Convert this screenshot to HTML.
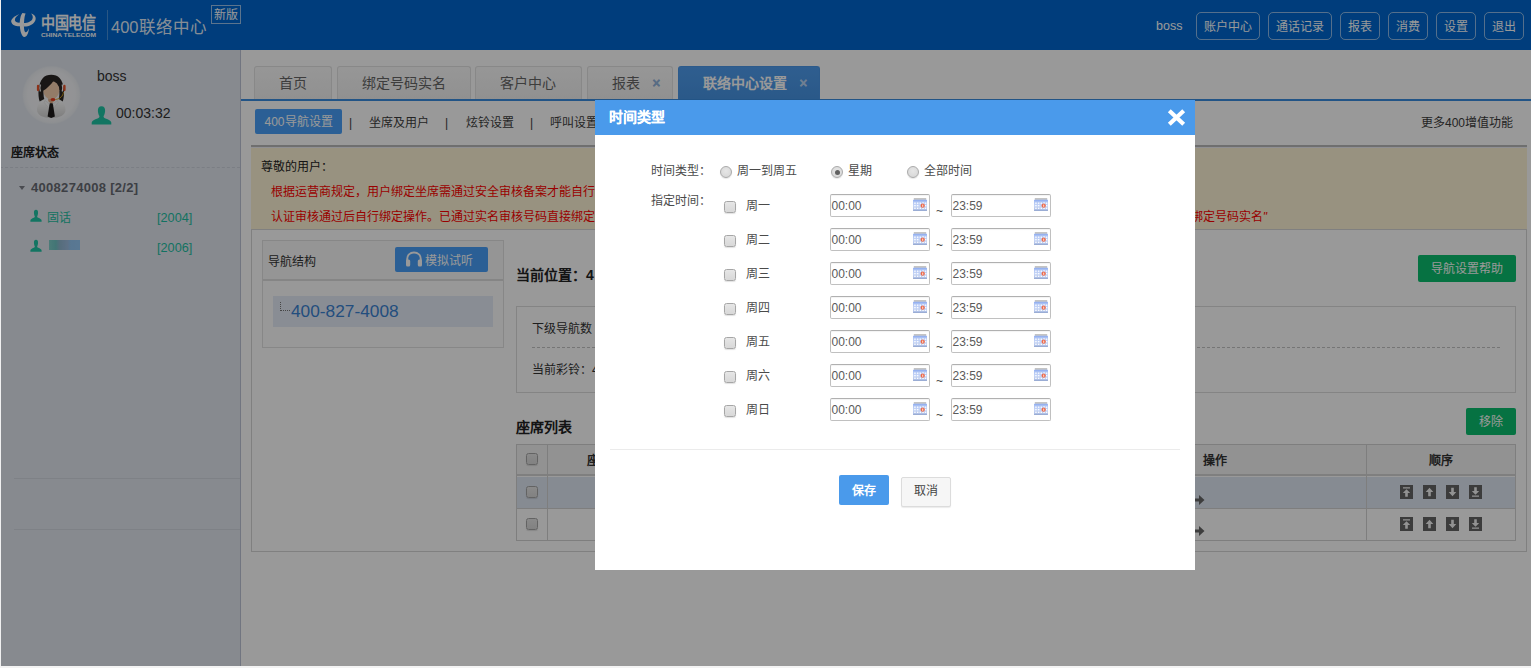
<!DOCTYPE html>
<html lang="zh-CN">
<head>
<meta charset="utf-8">
<title>400联络中心</title>
<style>
*{box-sizing:border-box;margin:0;padding:0}
html,body{width:1531px;height:668px;overflow:hidden;background:#f3f3f3}
body{font-family:"Liberation Sans",sans-serif;font-size:12px;color:#333;position:relative;line-height:1}
.a{position:absolute;white-space:nowrap}
#page{position:absolute;z-index:0;left:0;top:0;width:1531px;height:666px;background:#fff;overflow:hidden}
#page>*{position:absolute}
/* header */
#hdr{left:0;top:0;width:1531px;height:50px;background:#0067cf}
.hb{position:absolute;top:12px;height:28px;border:1px solid rgba(255,255,255,.55);border-radius:5px;color:#fff;font-size:12px;line-height:28px;text-align:center}
/* sidebar */
#side{left:0;top:50px;width:241px;z-index:2;height:616px;background:#e1e6ee;border-right:1px solid #bcc3d6}
/* main */
#main{left:240px;top:50px;width:1291px;height:616px;background:#fff}
.tab{position:absolute;top:16px;height:33px;border:1px solid #e3e3e3;border-bottom:none;border-radius:3px 3px 0 0;background:linear-gradient(#fbfbfb,#f1f1f1);font-size:14px;color:#666;line-height:32px;padding-left:24px}
.tab.on{background:linear-gradient(#4f9def,#4794e4);border-color:#4a97e8;color:#fff;font-weight:bold}
.tab i{position:absolute;font-style:normal;font-weight:bold;font-size:14px;right:11.6px;top:0;color:#93b4dc;text-shadow:0 0 .6px #93b4dc}
.tab.on i{color:#b9d4f3;text-shadow:0 0 .6px #b9d4f3}
.gbtn{position:absolute;background:#0bbf6e;color:#fff;border-radius:2px;text-align:center;font-size:12px}
.bbtn{position:absolute;background:#499ff8;color:#fff;border-radius:2px;text-align:center;font-size:12px}
.ic{position:absolute;width:13px;height:14px;background:#666}
.cb{position:absolute;width:12px;height:12px;border:1px solid #a6a6a6;border-radius:2.5px;background:linear-gradient(#e6e6e6,#d8d8d8);box-shadow:0 1px 1px rgba(0,0,0,.12)}
/* overlay + modal */
#ov{position:absolute;z-index:5;left:0;top:0;width:1531px;height:666px;background:rgba(0,0,0,.4)}
#modal{position:absolute;z-index:6;left:595px;top:100px;width:600px;height:470px;background:#fff;color:#4a4a4a}
#mh{position:absolute;left:0;top:0;width:600px;height:34.5px;background:#4a9aeb}
.rd{position:absolute;width:12px;height:12px;border:1px solid #aaa;border-radius:50%;background:radial-gradient(circle at 50% 40%,#e6e6e6,#d4d4d4);box-shadow:0 1px 1px rgba(0,0,0,.1)}
.rd.on:after{content:"";position:absolute;left:2.5px;top:2.5px;width:5px;height:5px;border-radius:50%;background:#606060}
.inp{position:absolute;width:100px;height:23px;border:1px solid #c0c0c0;border-top-color:#b0b0b0;border-radius:2px;background:#fff;box-shadow:inset 0 1px 1px rgba(0,0,0,.05);font-size:12px;color:#5a5a5a;line-height:23px;padding-left:0.5px}
.cal{position:absolute;left:82px;top:3px;width:14px;height:13px}
.til{position:absolute;font-size:12px;color:#444}
</style>
</head>
<body>
<div id="page">
<div id="hdr">
<svg class="a" style="left:0;top:0" width="260" height="50" viewBox="0 0 260 50">
 <g fill="#fff">
  <path d="M19.2,14.2C14,16 10.600,19.500 11.300,22C12.200,25.300 16.500,26.600 20.500,26.200L20.500,22.600C17.500,23 15.200,22 14.900,20.300C14.600,18.300 16.400,16 19.200,14.200Z"/>
  <path d="M31,13.400C35.200,14.500 36.600,17.800 35.200,20.800C33.500,24.500 28.500,26.800 24,26.600L24,23C27.500,23 31.200,21.500 32.400,19C33.300,17 32.600,14.800 31,13.400Z"/>
  <path d="M22.400,13C20.600,15 19.600,20 19.800,25C20,31 21.500,36 24,36.900C26.800,37.300 28.700,33 28.900,28.200C27.800,30.800 26.600,32.600 25.400,32.200C24.200,31.500 23.800,27.500 24,23C24.200,18.500 24.800,15.200 25.600,13.600Z"/>
 </g>
 <text x="41" y="29.5" font-family="Liberation Serif, serif" font-weight="bold" font-size="14" fill="#fff" textLength="55" lengthAdjust="spacingAndGlyphs" transform="translate(0,-6.1) scale(1,1.18)">中国电信</text>
 <text x="41" y="37" font-family="Liberation Sans, sans-serif" font-weight="bold" font-size="5.9" fill="#fff" textLength="55" lengthAdjust="spacingAndGlyphs">CHINA TELECOM</text>
 <rect x="107" y="10" width="1" height="30" fill="rgba(255,255,255,.28)"/>
</svg>
<div class="a" style="left:111px;top:18.3px;font-size:16.5px;color:rgba(255,255,255,.9);font-weight:300;line-height:18px">400联络中心</div>
<div class="a" style="left:211px;top:5px;width:30px;height:19px;border:1px solid rgba(255,255,255,.6);color:#fff;font-size:12px;line-height:18px;text-align:center">新版</div>
<div class="a" style="left:1156px;top:19px;color:#fff;font-size:12.5px;line-height:14px">boss</div>
<div class="hb" style="left:1196px;width:64px">账户中心</div>
<div class="hb" style="left:1268px;width:64px">通话记录</div>
<div class="hb" style="left:1340px;width:40px">报表</div>
<div class="hb" style="left:1388px;width:40px">消费</div>
<div class="hb" style="left:1436px;width:40px">设置</div>
<div class="hb" style="left:1484px;width:40px">退出</div>
</div>

<div id="side">
<svg class="a" style="left:21px;top:15px" width="60" height="60" viewBox="0 0 60 60">
<defs><radialGradient id="avg" cx=".5" cy=".5" r=".5"><stop offset="0" stop-color="#f9f9fb"/><stop offset=".8" stop-color="#f4f5f8"/><stop offset=".94" stop-color="#eceff3"/><stop offset="1" stop-color="#e1e6ee"/></radialGradient>
<linearGradient id="shg" x1="0" y1="0" x2="0" y2="1"><stop offset="0" stop-color="#fff"/><stop offset="1" stop-color="#d2d2d2"/></linearGradient></defs>
<circle cx="30.500" cy="30" r="29.500" fill="url(#avg)"/>
<path transform="translate(30.3 0) scale(.9 1) translate(-30.3 0)" d="M17.400,36.600C15,30 15.500,18.500 21,13C25,8.800 35.500,8.800 39.500,13C45,18.500 45.500,30 43.100,36.600L38.500,34C39.500,31 39.500,28 39,25L22,25C21.500,28 21.500,31 22.500,34Z" fill="#2a2624"/>
<path d="M16,45C16,39 19,36.200 24,35.200L27.500,34.600L30.200,38.200L33,34.600L36.500,35.200C41.500,36.200 44.500,39 44.500,45C44.500,50 38.500,53 30.200,53C22,53 16,50 16,45Z" fill="url(#shg)"/>
<path d="M27.200,32.500L33.300,32.500L33.300,36L30.200,39L27.200,36Z" fill="#e2b08c"/>
<ellipse cx="30.300" cy="25.200" rx="8" ry="9.300" fill="#f6cfae"/>
<path d="M21.800,26C20.500,17 25,11.200 31,11.600C37,12 40,16.500 39.200,23.500C37.500,19.500 35.500,16.800 33,15.200C30,19.500 26,23.500 21.800,26Z" fill="#2a2624"/>
<path d="M19.400,19.500Q18.200,23 19.400,26.500" stroke="#fff" stroke-width="1.200" fill="none"/>
<path d="M41.200,19.500Q42.400,23 41.200,26.500" stroke="#fff" stroke-width="1.200" fill="none"/>
<rect x="15.900" y="19.800" width="2.300" height="6.400" rx="1.100" fill="#ea5228"/>
<rect x="42.300" y="19.800" width="2.300" height="6.400" rx="1.100" fill="#ea5228"/>
<path d="M42.500,27C42,31.500 39,33.800 34.500,34.500" stroke="#d9a21c" stroke-width=".9" fill="none"/>
<ellipse cx="32" cy="34.600" rx="2.500" ry="1.500" fill="#ea3a1c"/>
<path d="M24,35.400L30.200,40.500L28,43.200L23.200,37.500Z" fill="#fafafa" stroke="#d5d5d5" stroke-width=".4"/>
<path d="M36.500,35.400L30.200,40.500L32.500,43.200L37.200,37.500Z" fill="#fafafa" stroke="#d5d5d5" stroke-width=".4"/>
<path d="M28.900,38.200L31.600,38.200L32.100,40.300L33.900,51.400L30.200,53L26.600,51.400L28.400,40.300Z" fill="#1f1c1c"/>
</svg>
<div class="a" style="left:97px;top:18px;font-size:14px;color:#333;line-height:16px">boss</div>
<svg class="a" style="left:91px;top:55px" width="21" height="20" viewBox="0 0 21 20"><path d="M10.500,1.300C13,1.300 14.300,3.300 14.100,6C13.900,8.500 13.300,10 12.600,11C12.500,12.200 12.900,12.800 14.500,13.400C17.500,14.600 20,15.500 20.300,17.500L20.300,19.500L0.700,19.500L0.700,17.500C1,15.500 3.500,14.600 6.500,13.400C8.100,12.800 8.500,12.200 8.400,11C7.700,10 7.100,8.500 6.900,6C6.700,3.300 8,1.300 10.500,1.300Z" fill="#1fc4a4"/></svg>
<div class="a" style="left:116px;top:55px;font-size:14px;color:#333;line-height:16px">00:03:32</div>
<div class="a" style="left:11px;top:96px;font-size:12px;font-weight:bold;color:#222;line-height:14px">座席状态</div>
<div class="a" style="left:0;top:117px;width:240px;height:0;border-top:1px dashed #cdd3dd"></div>
<div class="a" style="left:18.500px;top:135.500px;width:0;height:0;border:3.500px solid transparent;border-top:4px solid #7a7d86;border-bottom:none"></div>
<div class="a" style="left:31px;top:130px;font-size:13px;font-weight:bold;color:#666a72;line-height:15px;letter-spacing:.3px">4008274008 [2/2]</div>
<svg class="a" style="left:30px;top:159px" width="12" height="13" viewBox="0 0 21 20" preserveAspectRatio="none"><path d="M10.500,1.300C13,1.300 14.300,3.300 14.100,6C13.900,8.500 13.300,10 12.600,11C12.500,12.200 12.900,12.800 14.500,13.400C17.500,14.600 20,15.500 20.300,17.500L20.300,19.500L0.700,19.500L0.700,17.500C1,15.500 3.500,14.600 6.500,13.400C8.100,12.800 8.500,12.200 8.400,11C7.700,10 7.100,8.500 6.900,6C6.700,3.300 8,1.300 10.500,1.300Z" fill="#1fc4a4"/></svg>
<div class="a" style="left:47px;top:161px;font-size:12px;color:#1ebfa2;line-height:14px">固话</div>
<div class="a" style="left:157px;top:161px;font-size:12.7px;color:#1ebfa2;line-height:14px">[2004]</div>
<svg class="a" style="left:30px;top:189px" width="12" height="13" viewBox="0 0 21 20" preserveAspectRatio="none"><path d="M10.500,1.300C13,1.300 14.300,3.300 14.100,6C13.900,8.500 13.300,10 12.600,11C12.500,12.200 12.900,12.800 14.500,13.400C17.500,14.600 20,15.500 20.300,17.500L20.300,19.500L0.700,19.500L0.700,17.500C1,15.500 3.500,14.600 6.500,13.400C8.100,12.800 8.500,12.200 8.400,11C7.700,10 7.100,8.500 6.900,6C6.700,3.300 8,1.300 10.500,1.300Z" fill="#1fc4a4"/></svg>
<div class="a" style="left:49px;top:190px;width:31px;height:10px;background:linear-gradient(90deg,#7fcfca 0,#6fc4c4 22%,#8fb6cf 35%,#9dbde0 60%,#93c6f3 70%,#95c9f6 100%)"></div>
<div class="a" style="left:157px;top:191px;font-size:12.7px;color:#1ebfa2;line-height:14px">[2006]</div>
<div class="a" style="left:14px;top:428px;width:226px;height:1px;background:#d3d8e0"></div>
<div class="a" style="left:14px;top:479px;width:226px;height:1px;background:#d3d8e0"></div>
</div>

<div id="main">
<!-- tabs : coordinates relative to #main (x-240,y-50) -->
<div class="tab" style="left:14px;width:78px">首页</div>
<div class="tab" style="left:97px;width:134px">绑定号码实名</div>
<div class="tab" style="left:235px;width:107px">客户中心</div>
<div class="tab" style="left:347px;width:86px">报表<i>×</i></div>
<div class="tab on" style="left:438px;width:142px">联络中心设置<i>×</i></div>
<div class="a" style="left:0;top:49px;width:1291px;height:2px;background:#3a8ce0"></div>
<!-- subnav -->
<div class="bbtn" style="left:15px;top:59px;width:87px;height:25px;line-height:26px">400导航设置</div>
<div class="a" style="left:109px;top:65.5px;font-size:12px;color:#3c3c3c;line-height:14px">|</div>
<div class="a" style="left:129px;top:65.5px;font-size:12px;color:#3c3c3c;line-height:14px">坐席及用户</div>
<div class="a" style="left:205px;top:65.5px;font-size:12px;color:#3c3c3c;line-height:14px">|</div>
<div class="a" style="left:226px;top:65.5px;font-size:12px;color:#3c3c3c;line-height:14px">炫铃设置</div>
<div class="a" style="left:290px;top:65.5px;font-size:12px;color:#3c3c3c;line-height:14px">|</div>
<div class="a" style="left:310px;top:65.5px;font-size:12px;color:#3c3c3c;line-height:14px">呼叫设置</div>
<div class="a" style="left:1181px;top:65.5px;font-size:12px;color:#3c3c3c;line-height:14px">更多400增值功能</div>
<!-- notice -->
<div class="a" style="left:11px;top:95px;width:1276px;height:2px;background:#b9b9b9"></div>
<div class="a" style="left:11px;top:97px;width:1276px;height:1px;background:#f1f1f5"></div>
<div class="a" style="left:11px;top:98px;width:1276px;height:81px;background:#fdf4d5"></div>
<div class="a" style="left:21px;top:110px;font-size:12px;color:#222;line-height:14px">尊敬的用户：</div>
<div class="a" style="left:31px;top:135px;font-size:12px;color:#f00;line-height:14px">根据运营商规定，用户绑定坐席需通过安全审核备案才能自行绑定，请前往</div>
<div class="a" style="left:31px;top:160px;font-size:12px;color:#f00;line-height:14px">认证审核通过后自行绑定操作。已通过实名审核号码直接绑定坐席，未通过</div>
<div class="a" style="right:264px;top:160px;font-size:12px;color:#f00;line-height:14px;text-align:right">请先进行号码实名认证，点击“绑定号码实名<span style="font-family:'Liberation Sans',sans-serif;font-style:italic">"</span></div>
<!-- content box -->
<div class="a" style="left:11px;top:179px;width:1276px;height:323px;border:1px solid #d6d6d6;background:#fff"></div>
<!-- left panel -->
<div class="a" style="left:22px;top:190px;width:242px;height:108px;border:1px solid #e2e2e2;background:#fdfdfd"></div>
<div class="a" style="left:23px;top:191px;width:240px;height:40px;background:#f8f8f8;border-bottom:2px solid #dedede"></div>
<div class="a" style="left:28px;top:204.7px;font-size:12px;color:#333;line-height:14px">导航结构</div>
<div class="bbtn" style="left:155px;top:197px;width:93px;height:25px;line-height:29px;text-align:left;padding-left:30px">模拟试听</div>
<svg class="a" style="left:165px;top:201px" width="18" height="17" viewBox="0 0 18 17"><path d="M2.2,10.500V8.200C2.200,4.300 5,1.500 9,1.500C13,1.500 15.800,4.300 15.800,8.200V10.500" fill="none" stroke="#fff" stroke-width="2"/><rect x="1" y="8.500" width="4.200" height="7" rx="1.500" fill="#fff"/><rect x="12.800" y="8.500" width="4.200" height="7" rx="1.500" fill="#fff"/></svg>
<div class="a" style="left:33px;top:246px;width:220px;height:31px;background:#e5ebf7"></div>
<div class="a" style="left:40px;top:252px;width:10px;height:9px;border-left:1px dotted #777;border-bottom:1px dotted #777"></div>
<div class="a" style="left:51px;top:251px;font-size:17.300px;color:#3a82d2;line-height:20px">400-827-4008</div>
<!-- right -->
<div class="a" style="left:276px;top:216.7px;font-size:14px;font-weight:bold;color:#222;line-height:16px">当前位置：4</div>
<div class="gbtn" style="left:1178px;top:205px;width:98px;height:27px;line-height:29px">导航设置帮助</div>
<div class="a" style="left:276px;top:256px;width:1000px;height:87px;border:1px solid #dcdcdc"></div>
<div class="a" style="left:292px;top:271.5px;font-size:12px;color:#333;line-height:14px">下级导航数</div>
<div class="a" style="left:292px;top:297px;width:968px;height:0;border-top:1px dashed #c4c4c4"></div>
<div class="a" style="left:292px;top:312.5px;font-size:12px;color:#333;line-height:14px">当前彩铃：400</div>
<div class="a" style="left:276px;top:369px;font-size:14px;font-weight:bold;color:#222;line-height:16px">座席列表</div>
<div class="gbtn" style="left:1226px;top:358px;width:50px;height:27px;line-height:29px">移除</div>
<!-- table -->
<div class="a" style="left:276px;top:394px;width:1000px;height:97px;border:1px solid #d2d2d2;background:#fff"></div>
<div class="a" style="left:277px;top:395px;width:998px;height:31px;background:#f4f4f4;border-bottom:2px solid #d4d4d4"></div>
<div class="a" style="left:277px;top:427px;width:998px;height:31px;background:#e0e8f4"></div>
<div class="a" style="left:277px;top:458px;width:998px;height:1px;background:#d2d2d2"></div>
<div class="a" style="left:307px;top:395px;width:1px;height:95px;background:#d2d2d2"></div>
<div class="a" style="left:1126px;top:395px;width:1px;height:95px;background:#d2d2d2"></div>
<div class="cb" style="left:286px;top:403px"></div>
<div class="cb" style="left:286px;top:436px"></div>
<div class="cb" style="left:286px;top:468px"></div>
<div class="a" style="left:347px;top:404px;font-size:12px;font-weight:bold;color:#333;line-height:14px">座席</div>
<div class="a" style="left:963px;top:404px;font-size:12px;font-weight:bold;color:#333;line-height:14px">操作</div>
<div class="a" style="left:1189px;top:404px;font-size:12px;font-weight:bold;color:#333;line-height:14px">顺序</div>
<!-- arrows op column -->
<svg class="a" style="left:951px;top:444px" width="14" height="12" viewBox="0 0 14 12"><path d="M0,4.500H8V1L13.500,6L8,11V7.500H0Z" fill="#666"/></svg>
<svg class="a" style="left:951px;top:475px" width="14" height="12" viewBox="0 0 14 12"><path d="M0,4.500H8V1L13.500,6L8,11V7.500H0Z" fill="#666"/></svg>
<!-- order icons -->
<svg class="a" style="left:1160px;top:435px" width="84" height="14" viewBox="0 0 84 14"><use href="#o1"/><use href="#o2" x="23"/><use href="#o3" x="46"/><use href="#o4" x="69"/></svg>
<svg class="a" style="left:1160px;top:467px" width="84" height="14" viewBox="0 0 84 14"><use href="#o1"/><use href="#o2" x="23"/><use href="#o3" x="46"/><use href="#o4" x="69"/></svg>
<svg width="0" height="0" style="position:absolute"><defs>
 <g id="o1"><rect width="13" height="14" fill="#646464"/><path d="M3,2.200H10V3.400H3Z M6.500,4.300L10.200,8H7.800V11.800H5.200V8H2.800Z" fill="#f4f4f4"/></g>
 <g id="o2"><rect width="13" height="14" fill="#646464"/><path d="M6.500,2.800L10.300,7H7.800V11.200H5.200V7H2.700Z" fill="#f4f4f4"/></g>
 <g id="o3"><rect width="13" height="14" fill="#646464"/><path d="M6.500,11.200L10.300,7H7.800V2.800H5.200V7H2.700Z" fill="#f4f4f4"/></g>
 <g id="o4"><rect width="13" height="14" fill="#646464"/><path d="M3,10.600H10V11.800H3Z M6.500,9.700L10.200,6H7.800V2.200H5.200V6H2.800Z" fill="#f4f4f4"/></g>
</defs></svg>
</div>

</div>
<div id="ov"></div>
<div class="a" style="z-index:7;left:0;top:0;width:1px;height:668px;background:#f0f0f0"></div>
<div class="a" style="z-index:7;left:0;top:666px;width:1531px;height:2px;background:#f3f3f3"></div>
<div id="modal">
<div id="mh"></div>
<div class="a" style="left:14px;top:9px;font-size:14px;font-weight:bold;color:#fff;line-height:16px;text-shadow:0 0 .5px #fff">时间类型</div>
<svg class="a" style="left:571px;top:7.500px" width="20" height="19" viewBox="0 0 20 19"><path d="M3.300,2.800L17.700,16.200M17.700,2.800L3.300,16.200" stroke="#fff" stroke-width="4.200" fill="none"/></svg>
<div class="a" style="left:56px;top:63.500px;font-size:12px;line-height:14px">时间类型：</div>
<div class="rd" style="left:125px;top:66px"></div>
<div class="a" style="left:142px;top:63.500px;font-size:12px;line-height:14px">周一到周五</div>
<div class="rd on" style="left:236px;top:66px"></div>
<div class="a" style="left:253px;top:63.500px;font-size:12px;line-height:14px">星期</div>
<div class="rd" style="left:312px;top:66px"></div>
<div class="a" style="left:329px;top:63.500px;font-size:12px;line-height:14px">全部时间</div>
<div class="a" style="left:56px;top:94px;font-size:12px;line-height:14px">指定时间：</div>
<div class="cb" style="left:129px;top:100.5px"></div>
<div class="a" style="left:151px;top:98.5px;font-size:12px;line-height:14px">周一</div>
<div class="inp" style="left:235px;top:94px">00:00<svg class="cal" viewBox="0 0 14 13"><defs><linearGradient id="cg" x1="0" y1="0" x2="0" y2="1"><stop offset="0" stop-color="#86a6ee"/><stop offset=".18" stop-color="#adc3f4"/><stop offset=".55" stop-color="#c6d5f6"/><stop offset=".85" stop-color="#b4c5ea"/><stop offset="1" stop-color="#8fa2cb"/></linearGradient></defs><rect x=".8" y="0" width="12.400" height="1.900" fill="#c4c4c4"/><rect x="0" y="1.700" width="14" height="11.300" rx=".6" fill="url(#cg)"/><g fill="#fff" fill-opacity=".92"><rect x="1.200" y="4.500" width="1.500" height="1.400"/><rect x="3.900" y="4.500" width="1.500" height="1.400"/><rect x="6.600" y="4.500" width="1.500" height="1.400"/><rect x="9.300" y="4.300" width="1.500" height="1.400"/><rect x="11.800" y="4.500" width="1.500" height="1.400"/><rect x="1.200" y="6.900" width="1.500" height="1.400"/><rect x="3.900" y="6.900" width="1.500" height="1.400"/><rect x="12" y="6.900" width="1.300" height="1.400"/><rect x="1.200" y="9.600" width="1.500" height="1.400"/><rect x="3.900" y="9.600" width="1.500" height="1.400"/><rect x="6.600" y="9.600" width="1.500" height="1.400"/><rect x="9.300" y="9.600" width="1.500" height="1.400"/><rect x="11.800" y="9.600" width="1.500" height="1.400"/></g><circle cx="9.700" cy="7.700" r="2.100" fill="#ec6a4c"/><rect x="9.200" y="6.600" width="1" height="2.200" fill="#fde3d6"/></svg></div>
<div class="til" style="left:341px;top:105.0px">~</div>
<div class="inp" style="left:356px;top:94px">23:59<svg class="cal" viewBox="0 0 14 13"><defs><linearGradient id="cg" x1="0" y1="0" x2="0" y2="1"><stop offset="0" stop-color="#86a6ee"/><stop offset=".18" stop-color="#adc3f4"/><stop offset=".55" stop-color="#c6d5f6"/><stop offset=".85" stop-color="#b4c5ea"/><stop offset="1" stop-color="#8fa2cb"/></linearGradient></defs><rect x=".8" y="0" width="12.400" height="1.900" fill="#c4c4c4"/><rect x="0" y="1.700" width="14" height="11.300" rx=".6" fill="url(#cg)"/><g fill="#fff" fill-opacity=".92"><rect x="1.200" y="4.500" width="1.500" height="1.400"/><rect x="3.900" y="4.500" width="1.500" height="1.400"/><rect x="6.600" y="4.500" width="1.500" height="1.400"/><rect x="9.300" y="4.300" width="1.500" height="1.400"/><rect x="11.800" y="4.500" width="1.500" height="1.400"/><rect x="1.200" y="6.900" width="1.500" height="1.400"/><rect x="3.900" y="6.900" width="1.500" height="1.400"/><rect x="12" y="6.900" width="1.300" height="1.400"/><rect x="1.200" y="9.600" width="1.500" height="1.400"/><rect x="3.900" y="9.600" width="1.500" height="1.400"/><rect x="6.600" y="9.600" width="1.500" height="1.400"/><rect x="9.300" y="9.600" width="1.500" height="1.400"/><rect x="11.800" y="9.600" width="1.500" height="1.400"/></g><circle cx="9.700" cy="7.700" r="2.100" fill="#ec6a4c"/><rect x="9.200" y="6.600" width="1" height="2.200" fill="#fde3d6"/></svg></div>
<div class="cb" style="left:129px;top:134.5px"></div>
<div class="a" style="left:151px;top:132.5px;font-size:12px;line-height:14px">周二</div>
<div class="inp" style="left:235px;top:128px">00:00<svg class="cal" viewBox="0 0 14 13"><defs><linearGradient id="cg" x1="0" y1="0" x2="0" y2="1"><stop offset="0" stop-color="#86a6ee"/><stop offset=".18" stop-color="#adc3f4"/><stop offset=".55" stop-color="#c6d5f6"/><stop offset=".85" stop-color="#b4c5ea"/><stop offset="1" stop-color="#8fa2cb"/></linearGradient></defs><rect x=".8" y="0" width="12.400" height="1.900" fill="#c4c4c4"/><rect x="0" y="1.700" width="14" height="11.300" rx=".6" fill="url(#cg)"/><g fill="#fff" fill-opacity=".92"><rect x="1.200" y="4.500" width="1.500" height="1.400"/><rect x="3.900" y="4.500" width="1.500" height="1.400"/><rect x="6.600" y="4.500" width="1.500" height="1.400"/><rect x="9.300" y="4.300" width="1.500" height="1.400"/><rect x="11.800" y="4.500" width="1.500" height="1.400"/><rect x="1.200" y="6.900" width="1.500" height="1.400"/><rect x="3.900" y="6.900" width="1.500" height="1.400"/><rect x="12" y="6.900" width="1.300" height="1.400"/><rect x="1.200" y="9.600" width="1.500" height="1.400"/><rect x="3.900" y="9.600" width="1.500" height="1.400"/><rect x="6.600" y="9.600" width="1.500" height="1.400"/><rect x="9.300" y="9.600" width="1.500" height="1.400"/><rect x="11.800" y="9.600" width="1.500" height="1.400"/></g><circle cx="9.700" cy="7.700" r="2.100" fill="#ec6a4c"/><rect x="9.200" y="6.600" width="1" height="2.200" fill="#fde3d6"/></svg></div>
<div class="til" style="left:341px;top:139.0px">~</div>
<div class="inp" style="left:356px;top:128px">23:59<svg class="cal" viewBox="0 0 14 13"><defs><linearGradient id="cg" x1="0" y1="0" x2="0" y2="1"><stop offset="0" stop-color="#86a6ee"/><stop offset=".18" stop-color="#adc3f4"/><stop offset=".55" stop-color="#c6d5f6"/><stop offset=".85" stop-color="#b4c5ea"/><stop offset="1" stop-color="#8fa2cb"/></linearGradient></defs><rect x=".8" y="0" width="12.400" height="1.900" fill="#c4c4c4"/><rect x="0" y="1.700" width="14" height="11.300" rx=".6" fill="url(#cg)"/><g fill="#fff" fill-opacity=".92"><rect x="1.200" y="4.500" width="1.500" height="1.400"/><rect x="3.900" y="4.500" width="1.500" height="1.400"/><rect x="6.600" y="4.500" width="1.500" height="1.400"/><rect x="9.300" y="4.300" width="1.500" height="1.400"/><rect x="11.800" y="4.500" width="1.500" height="1.400"/><rect x="1.200" y="6.900" width="1.500" height="1.400"/><rect x="3.900" y="6.900" width="1.500" height="1.400"/><rect x="12" y="6.900" width="1.300" height="1.400"/><rect x="1.200" y="9.600" width="1.500" height="1.400"/><rect x="3.900" y="9.600" width="1.500" height="1.400"/><rect x="6.600" y="9.600" width="1.500" height="1.400"/><rect x="9.300" y="9.600" width="1.500" height="1.400"/><rect x="11.800" y="9.600" width="1.500" height="1.400"/></g><circle cx="9.700" cy="7.700" r="2.100" fill="#ec6a4c"/><rect x="9.200" y="6.600" width="1" height="2.200" fill="#fde3d6"/></svg></div>
<div class="cb" style="left:129px;top:168.5px"></div>
<div class="a" style="left:151px;top:166.5px;font-size:12px;line-height:14px">周三</div>
<div class="inp" style="left:235px;top:162px">00:00<svg class="cal" viewBox="0 0 14 13"><defs><linearGradient id="cg" x1="0" y1="0" x2="0" y2="1"><stop offset="0" stop-color="#86a6ee"/><stop offset=".18" stop-color="#adc3f4"/><stop offset=".55" stop-color="#c6d5f6"/><stop offset=".85" stop-color="#b4c5ea"/><stop offset="1" stop-color="#8fa2cb"/></linearGradient></defs><rect x=".8" y="0" width="12.400" height="1.900" fill="#c4c4c4"/><rect x="0" y="1.700" width="14" height="11.300" rx=".6" fill="url(#cg)"/><g fill="#fff" fill-opacity=".92"><rect x="1.200" y="4.500" width="1.500" height="1.400"/><rect x="3.900" y="4.500" width="1.500" height="1.400"/><rect x="6.600" y="4.500" width="1.500" height="1.400"/><rect x="9.300" y="4.300" width="1.500" height="1.400"/><rect x="11.800" y="4.500" width="1.500" height="1.400"/><rect x="1.200" y="6.900" width="1.500" height="1.400"/><rect x="3.900" y="6.900" width="1.500" height="1.400"/><rect x="12" y="6.900" width="1.300" height="1.400"/><rect x="1.200" y="9.600" width="1.500" height="1.400"/><rect x="3.900" y="9.600" width="1.500" height="1.400"/><rect x="6.600" y="9.600" width="1.500" height="1.400"/><rect x="9.300" y="9.600" width="1.500" height="1.400"/><rect x="11.800" y="9.600" width="1.500" height="1.400"/></g><circle cx="9.700" cy="7.700" r="2.100" fill="#ec6a4c"/><rect x="9.200" y="6.600" width="1" height="2.200" fill="#fde3d6"/></svg></div>
<div class="til" style="left:341px;top:173.0px">~</div>
<div class="inp" style="left:356px;top:162px">23:59<svg class="cal" viewBox="0 0 14 13"><defs><linearGradient id="cg" x1="0" y1="0" x2="0" y2="1"><stop offset="0" stop-color="#86a6ee"/><stop offset=".18" stop-color="#adc3f4"/><stop offset=".55" stop-color="#c6d5f6"/><stop offset=".85" stop-color="#b4c5ea"/><stop offset="1" stop-color="#8fa2cb"/></linearGradient></defs><rect x=".8" y="0" width="12.400" height="1.900" fill="#c4c4c4"/><rect x="0" y="1.700" width="14" height="11.300" rx=".6" fill="url(#cg)"/><g fill="#fff" fill-opacity=".92"><rect x="1.200" y="4.500" width="1.500" height="1.400"/><rect x="3.900" y="4.500" width="1.500" height="1.400"/><rect x="6.600" y="4.500" width="1.500" height="1.400"/><rect x="9.300" y="4.300" width="1.500" height="1.400"/><rect x="11.800" y="4.500" width="1.500" height="1.400"/><rect x="1.200" y="6.900" width="1.500" height="1.400"/><rect x="3.900" y="6.900" width="1.500" height="1.400"/><rect x="12" y="6.900" width="1.300" height="1.400"/><rect x="1.200" y="9.600" width="1.500" height="1.400"/><rect x="3.900" y="9.600" width="1.500" height="1.400"/><rect x="6.600" y="9.600" width="1.500" height="1.400"/><rect x="9.300" y="9.600" width="1.500" height="1.400"/><rect x="11.800" y="9.600" width="1.500" height="1.400"/></g><circle cx="9.700" cy="7.700" r="2.100" fill="#ec6a4c"/><rect x="9.200" y="6.600" width="1" height="2.200" fill="#fde3d6"/></svg></div>
<div class="cb" style="left:129px;top:202.5px"></div>
<div class="a" style="left:151px;top:200.5px;font-size:12px;line-height:14px">周四</div>
<div class="inp" style="left:235px;top:196px">00:00<svg class="cal" viewBox="0 0 14 13"><defs><linearGradient id="cg" x1="0" y1="0" x2="0" y2="1"><stop offset="0" stop-color="#86a6ee"/><stop offset=".18" stop-color="#adc3f4"/><stop offset=".55" stop-color="#c6d5f6"/><stop offset=".85" stop-color="#b4c5ea"/><stop offset="1" stop-color="#8fa2cb"/></linearGradient></defs><rect x=".8" y="0" width="12.400" height="1.900" fill="#c4c4c4"/><rect x="0" y="1.700" width="14" height="11.300" rx=".6" fill="url(#cg)"/><g fill="#fff" fill-opacity=".92"><rect x="1.200" y="4.500" width="1.500" height="1.400"/><rect x="3.900" y="4.500" width="1.500" height="1.400"/><rect x="6.600" y="4.500" width="1.500" height="1.400"/><rect x="9.300" y="4.300" width="1.500" height="1.400"/><rect x="11.800" y="4.500" width="1.500" height="1.400"/><rect x="1.200" y="6.900" width="1.500" height="1.400"/><rect x="3.900" y="6.900" width="1.500" height="1.400"/><rect x="12" y="6.900" width="1.300" height="1.400"/><rect x="1.200" y="9.600" width="1.500" height="1.400"/><rect x="3.900" y="9.600" width="1.500" height="1.400"/><rect x="6.600" y="9.600" width="1.500" height="1.400"/><rect x="9.300" y="9.600" width="1.500" height="1.400"/><rect x="11.800" y="9.600" width="1.500" height="1.400"/></g><circle cx="9.700" cy="7.700" r="2.100" fill="#ec6a4c"/><rect x="9.200" y="6.600" width="1" height="2.200" fill="#fde3d6"/></svg></div>
<div class="til" style="left:341px;top:207.0px">~</div>
<div class="inp" style="left:356px;top:196px">23:59<svg class="cal" viewBox="0 0 14 13"><defs><linearGradient id="cg" x1="0" y1="0" x2="0" y2="1"><stop offset="0" stop-color="#86a6ee"/><stop offset=".18" stop-color="#adc3f4"/><stop offset=".55" stop-color="#c6d5f6"/><stop offset=".85" stop-color="#b4c5ea"/><stop offset="1" stop-color="#8fa2cb"/></linearGradient></defs><rect x=".8" y="0" width="12.400" height="1.900" fill="#c4c4c4"/><rect x="0" y="1.700" width="14" height="11.300" rx=".6" fill="url(#cg)"/><g fill="#fff" fill-opacity=".92"><rect x="1.200" y="4.500" width="1.500" height="1.400"/><rect x="3.900" y="4.500" width="1.500" height="1.400"/><rect x="6.600" y="4.500" width="1.500" height="1.400"/><rect x="9.300" y="4.300" width="1.500" height="1.400"/><rect x="11.800" y="4.500" width="1.500" height="1.400"/><rect x="1.200" y="6.900" width="1.500" height="1.400"/><rect x="3.900" y="6.900" width="1.500" height="1.400"/><rect x="12" y="6.900" width="1.300" height="1.400"/><rect x="1.200" y="9.600" width="1.500" height="1.400"/><rect x="3.900" y="9.600" width="1.500" height="1.400"/><rect x="6.600" y="9.600" width="1.500" height="1.400"/><rect x="9.300" y="9.600" width="1.500" height="1.400"/><rect x="11.800" y="9.600" width="1.500" height="1.400"/></g><circle cx="9.700" cy="7.700" r="2.100" fill="#ec6a4c"/><rect x="9.200" y="6.600" width="1" height="2.200" fill="#fde3d6"/></svg></div>
<div class="cb" style="left:129px;top:236.5px"></div>
<div class="a" style="left:151px;top:234.5px;font-size:12px;line-height:14px">周五</div>
<div class="inp" style="left:235px;top:230px">00:00<svg class="cal" viewBox="0 0 14 13"><defs><linearGradient id="cg" x1="0" y1="0" x2="0" y2="1"><stop offset="0" stop-color="#86a6ee"/><stop offset=".18" stop-color="#adc3f4"/><stop offset=".55" stop-color="#c6d5f6"/><stop offset=".85" stop-color="#b4c5ea"/><stop offset="1" stop-color="#8fa2cb"/></linearGradient></defs><rect x=".8" y="0" width="12.400" height="1.900" fill="#c4c4c4"/><rect x="0" y="1.700" width="14" height="11.300" rx=".6" fill="url(#cg)"/><g fill="#fff" fill-opacity=".92"><rect x="1.200" y="4.500" width="1.500" height="1.400"/><rect x="3.900" y="4.500" width="1.500" height="1.400"/><rect x="6.600" y="4.500" width="1.500" height="1.400"/><rect x="9.300" y="4.300" width="1.500" height="1.400"/><rect x="11.800" y="4.500" width="1.500" height="1.400"/><rect x="1.200" y="6.900" width="1.500" height="1.400"/><rect x="3.900" y="6.900" width="1.500" height="1.400"/><rect x="12" y="6.900" width="1.300" height="1.400"/><rect x="1.200" y="9.600" width="1.500" height="1.400"/><rect x="3.900" y="9.600" width="1.500" height="1.400"/><rect x="6.600" y="9.600" width="1.500" height="1.400"/><rect x="9.300" y="9.600" width="1.500" height="1.400"/><rect x="11.800" y="9.600" width="1.500" height="1.400"/></g><circle cx="9.700" cy="7.700" r="2.100" fill="#ec6a4c"/><rect x="9.200" y="6.600" width="1" height="2.200" fill="#fde3d6"/></svg></div>
<div class="til" style="left:341px;top:241.0px">~</div>
<div class="inp" style="left:356px;top:230px">23:59<svg class="cal" viewBox="0 0 14 13"><defs><linearGradient id="cg" x1="0" y1="0" x2="0" y2="1"><stop offset="0" stop-color="#86a6ee"/><stop offset=".18" stop-color="#adc3f4"/><stop offset=".55" stop-color="#c6d5f6"/><stop offset=".85" stop-color="#b4c5ea"/><stop offset="1" stop-color="#8fa2cb"/></linearGradient></defs><rect x=".8" y="0" width="12.400" height="1.900" fill="#c4c4c4"/><rect x="0" y="1.700" width="14" height="11.300" rx=".6" fill="url(#cg)"/><g fill="#fff" fill-opacity=".92"><rect x="1.200" y="4.500" width="1.500" height="1.400"/><rect x="3.900" y="4.500" width="1.500" height="1.400"/><rect x="6.600" y="4.500" width="1.500" height="1.400"/><rect x="9.300" y="4.300" width="1.500" height="1.400"/><rect x="11.800" y="4.500" width="1.500" height="1.400"/><rect x="1.200" y="6.900" width="1.500" height="1.400"/><rect x="3.900" y="6.900" width="1.500" height="1.400"/><rect x="12" y="6.900" width="1.300" height="1.400"/><rect x="1.200" y="9.600" width="1.500" height="1.400"/><rect x="3.900" y="9.600" width="1.500" height="1.400"/><rect x="6.600" y="9.600" width="1.500" height="1.400"/><rect x="9.300" y="9.600" width="1.500" height="1.400"/><rect x="11.800" y="9.600" width="1.500" height="1.400"/></g><circle cx="9.700" cy="7.700" r="2.100" fill="#ec6a4c"/><rect x="9.200" y="6.600" width="1" height="2.200" fill="#fde3d6"/></svg></div>
<div class="cb" style="left:129px;top:270.5px"></div>
<div class="a" style="left:151px;top:268.5px;font-size:12px;line-height:14px">周六</div>
<div class="inp" style="left:235px;top:264px">00:00<svg class="cal" viewBox="0 0 14 13"><defs><linearGradient id="cg" x1="0" y1="0" x2="0" y2="1"><stop offset="0" stop-color="#86a6ee"/><stop offset=".18" stop-color="#adc3f4"/><stop offset=".55" stop-color="#c6d5f6"/><stop offset=".85" stop-color="#b4c5ea"/><stop offset="1" stop-color="#8fa2cb"/></linearGradient></defs><rect x=".8" y="0" width="12.400" height="1.900" fill="#c4c4c4"/><rect x="0" y="1.700" width="14" height="11.300" rx=".6" fill="url(#cg)"/><g fill="#fff" fill-opacity=".92"><rect x="1.200" y="4.500" width="1.500" height="1.400"/><rect x="3.900" y="4.500" width="1.500" height="1.400"/><rect x="6.600" y="4.500" width="1.500" height="1.400"/><rect x="9.300" y="4.300" width="1.500" height="1.400"/><rect x="11.800" y="4.500" width="1.500" height="1.400"/><rect x="1.200" y="6.900" width="1.500" height="1.400"/><rect x="3.900" y="6.900" width="1.500" height="1.400"/><rect x="12" y="6.900" width="1.300" height="1.400"/><rect x="1.200" y="9.600" width="1.500" height="1.400"/><rect x="3.900" y="9.600" width="1.500" height="1.400"/><rect x="6.600" y="9.600" width="1.500" height="1.400"/><rect x="9.300" y="9.600" width="1.500" height="1.400"/><rect x="11.800" y="9.600" width="1.500" height="1.400"/></g><circle cx="9.700" cy="7.700" r="2.100" fill="#ec6a4c"/><rect x="9.200" y="6.600" width="1" height="2.200" fill="#fde3d6"/></svg></div>
<div class="til" style="left:341px;top:275.0px">~</div>
<div class="inp" style="left:356px;top:264px">23:59<svg class="cal" viewBox="0 0 14 13"><defs><linearGradient id="cg" x1="0" y1="0" x2="0" y2="1"><stop offset="0" stop-color="#86a6ee"/><stop offset=".18" stop-color="#adc3f4"/><stop offset=".55" stop-color="#c6d5f6"/><stop offset=".85" stop-color="#b4c5ea"/><stop offset="1" stop-color="#8fa2cb"/></linearGradient></defs><rect x=".8" y="0" width="12.400" height="1.900" fill="#c4c4c4"/><rect x="0" y="1.700" width="14" height="11.300" rx=".6" fill="url(#cg)"/><g fill="#fff" fill-opacity=".92"><rect x="1.200" y="4.500" width="1.500" height="1.400"/><rect x="3.900" y="4.500" width="1.500" height="1.400"/><rect x="6.600" y="4.500" width="1.500" height="1.400"/><rect x="9.300" y="4.300" width="1.500" height="1.400"/><rect x="11.800" y="4.500" width="1.500" height="1.400"/><rect x="1.200" y="6.900" width="1.500" height="1.400"/><rect x="3.900" y="6.900" width="1.500" height="1.400"/><rect x="12" y="6.900" width="1.300" height="1.400"/><rect x="1.200" y="9.600" width="1.500" height="1.400"/><rect x="3.900" y="9.600" width="1.500" height="1.400"/><rect x="6.600" y="9.600" width="1.500" height="1.400"/><rect x="9.300" y="9.600" width="1.500" height="1.400"/><rect x="11.800" y="9.600" width="1.500" height="1.400"/></g><circle cx="9.700" cy="7.700" r="2.100" fill="#ec6a4c"/><rect x="9.200" y="6.600" width="1" height="2.200" fill="#fde3d6"/></svg></div>
<div class="cb" style="left:129px;top:304.5px"></div>
<div class="a" style="left:151px;top:302.5px;font-size:12px;line-height:14px">周日</div>
<div class="inp" style="left:235px;top:298px">00:00<svg class="cal" viewBox="0 0 14 13"><defs><linearGradient id="cg" x1="0" y1="0" x2="0" y2="1"><stop offset="0" stop-color="#86a6ee"/><stop offset=".18" stop-color="#adc3f4"/><stop offset=".55" stop-color="#c6d5f6"/><stop offset=".85" stop-color="#b4c5ea"/><stop offset="1" stop-color="#8fa2cb"/></linearGradient></defs><rect x=".8" y="0" width="12.400" height="1.900" fill="#c4c4c4"/><rect x="0" y="1.700" width="14" height="11.300" rx=".6" fill="url(#cg)"/><g fill="#fff" fill-opacity=".92"><rect x="1.200" y="4.500" width="1.500" height="1.400"/><rect x="3.900" y="4.500" width="1.500" height="1.400"/><rect x="6.600" y="4.500" width="1.500" height="1.400"/><rect x="9.300" y="4.300" width="1.500" height="1.400"/><rect x="11.800" y="4.500" width="1.500" height="1.400"/><rect x="1.200" y="6.900" width="1.500" height="1.400"/><rect x="3.900" y="6.900" width="1.500" height="1.400"/><rect x="12" y="6.900" width="1.300" height="1.400"/><rect x="1.200" y="9.600" width="1.500" height="1.400"/><rect x="3.900" y="9.600" width="1.500" height="1.400"/><rect x="6.600" y="9.600" width="1.500" height="1.400"/><rect x="9.300" y="9.600" width="1.500" height="1.400"/><rect x="11.800" y="9.600" width="1.500" height="1.400"/></g><circle cx="9.700" cy="7.700" r="2.100" fill="#ec6a4c"/><rect x="9.200" y="6.600" width="1" height="2.200" fill="#fde3d6"/></svg></div>
<div class="til" style="left:341px;top:309.0px">~</div>
<div class="inp" style="left:356px;top:298px">23:59<svg class="cal" viewBox="0 0 14 13"><defs><linearGradient id="cg" x1="0" y1="0" x2="0" y2="1"><stop offset="0" stop-color="#86a6ee"/><stop offset=".18" stop-color="#adc3f4"/><stop offset=".55" stop-color="#c6d5f6"/><stop offset=".85" stop-color="#b4c5ea"/><stop offset="1" stop-color="#8fa2cb"/></linearGradient></defs><rect x=".8" y="0" width="12.400" height="1.900" fill="#c4c4c4"/><rect x="0" y="1.700" width="14" height="11.300" rx=".6" fill="url(#cg)"/><g fill="#fff" fill-opacity=".92"><rect x="1.200" y="4.500" width="1.500" height="1.400"/><rect x="3.900" y="4.500" width="1.500" height="1.400"/><rect x="6.600" y="4.500" width="1.500" height="1.400"/><rect x="9.300" y="4.300" width="1.500" height="1.400"/><rect x="11.800" y="4.500" width="1.500" height="1.400"/><rect x="1.200" y="6.900" width="1.500" height="1.400"/><rect x="3.900" y="6.900" width="1.500" height="1.400"/><rect x="12" y="6.900" width="1.300" height="1.400"/><rect x="1.200" y="9.600" width="1.500" height="1.400"/><rect x="3.900" y="9.600" width="1.500" height="1.400"/><rect x="6.600" y="9.600" width="1.500" height="1.400"/><rect x="9.300" y="9.600" width="1.500" height="1.400"/><rect x="11.800" y="9.600" width="1.500" height="1.400"/></g><circle cx="9.700" cy="7.700" r="2.100" fill="#ec6a4c"/><rect x="9.200" y="6.600" width="1" height="2.200" fill="#fde3d6"/></svg></div>
<div class="a" style="left:15px;top:349px;width:570px;height:1px;background:#ebebeb"></div>
<div class="a" style="left:244px;top:375px;width:50px;height:30px;background:#4a9aeb;border-radius:2px;color:#fff;font-weight:bold;font-size:12px;line-height:32px;text-align:center">保存</div>
<div class="a" style="left:306px;top:377px;width:50px;height:30px;background:#f6f6f6;border:1px solid #dcdcdc;border-radius:2px;color:#444;font-size:12px;line-height:26px;text-align:center;box-shadow:0 1px 1px rgba(0,0,0,.08)">取消</div>
</div>
</body>
</html>
